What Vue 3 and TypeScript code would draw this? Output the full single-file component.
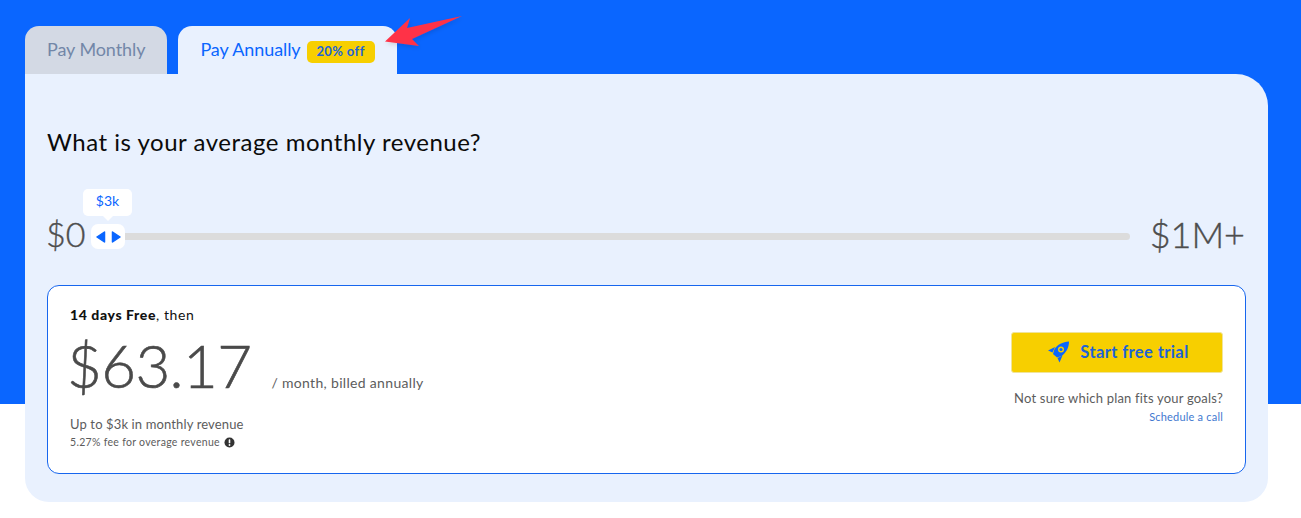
<script setup lang="ts">
const tabs = [
  { label: 'Pay Monthly', active: false },
  { label: 'Pay Annually', active: true, badge: '20% off' },
]
</script>

<template>
  <div class="page">
    <div class="tabs">
      <div v-for="t in tabs" :key="t.label" class="tab" :class="{ active: t.active }">
        <span>{{ t.label }}</span>
        <span v-if="t.badge" class="badge">{{ t.badge }}</span>
      </div>
    </div>
    <svg class="arrow" width="90" height="44" viewBox="380 10 90 44">
      <defs>
        <filter id="sh" x="-20%" y="-20%" width="140%" height="160%">
          <feDropShadow dx="1" dy="2" stdDeviation="2" flood-color="#000" flood-opacity="0.12" />
        </filter>
      </defs>
      <path d="M385 41.5 L410 18 L407 28 L462 16 L412 39 L419 46 Z" fill="#ff3347" filter="url(#sh)" />
    </svg>
    <div class="panel">
      <h2 class="question">What is your average monthly revenue?</h2>
      <div class="slider">
        <span class="end first">$0</span>
        <div class="track">
          <div class="handle">
            <div class="tip">$3k</div>
            <svg width="25" height="12" viewBox="0 0 25 12"><path d="M8.500 1v10L1 6zM16.500 1v10L24 6z" fill="#0a66ff" stroke="#0a66ff" stroke-width="1.500" stroke-linejoin="round" /></svg>
          </div>
        </div>
        <span class="end last">$1M+</span>
      </div>
      <div class="card">
        <div class="left">
          <div class="free"><b>14 days Free</b>, then</div>
          <div class="price-row">
            <span class="price">$63.17</span>
            <span class="per">/ month, billed annually</span>
          </div>
          <div class="up">Up to $3k in monthly revenue</div>
          <div class="fee">
            5.27% fee for overage revenue
            <svg width="11" height="11" viewBox="0 0 11 11"><circle cx="5.500" cy="5.500" r="5" fill="#333" /><rect x="4.700" y="2.300" width="1.600" height="4" rx=".6" fill="#fff" /><circle cx="5.500" cy="8" r=".9" fill="#fff" /></svg>
          </div>
        </div>
        <div class="right">
          <button class="cta">
            <svg class="rocket" width="23" height="22" viewBox="0 0 23 22">
              <path fill="#0a66ff" d="M22 .5C15.500 1 10.500 3.500 7.500 8L6 13l4 3.500 4.500-1.500C19 11.500 22 7 22 .5Z" />
              <path fill="#0a66ff" d="M8 6 1 9.500l4.500 2zM15.500 14.500 12.500 21.500 10.500 17z" />
              <circle cx="14" cy="8.500" r="3" fill="#f7cf00" />
              <circle cx="14" cy="8.500" r="1.600" fill="#0a66ff" />
            </svg>
            <span>Start free trial</span>
          </button>
          <div class="unsure">Not sure which plan fits your goals?</div>
          <a class="call">Schedule a call</a>
        </div>
      </div>
    </div>
  </div>
</template>

<style>
html, body { margin: 0; background: #fff; }
</style>

<style scoped>
.page {
  position: relative;
  box-sizing: border-box;
  width: 1301px;
  height: 518px;
  padding: 26px 33px 16px 25px;
  background: linear-gradient(#0a66ff 404px, #fff 404px);
  font-family: Lato, "Open Sans", sans-serif;
  overflow: hidden;
}
.tabs { display: flex; gap: 11px; height: 48px; }
.tab {
  display: flex;
  align-items: center;
  gap: 6px;
  padding: 0 22px 3px;
  border-radius: 14px 14px 0 0;
  background: #d3d9e4;
  color: #7287a8;
  font-size: 18px;
  letter-spacing: -.08px;
}
.tab.active { background: #e9f1fe; color: #0a66ff; }
.badge {
  display: flex;
  align-items: center;
  justify-content: center;
  align-self: flex-start;
  box-sizing: border-box;
  width: 68px;
  height: 22px;
  margin-top: 15px;
  padding-bottom: 2px;
  border-radius: 5px;
  background: #f7cf00;
  color: #1d63d8;
  font-size: 13px;
  font-weight: 700;
  letter-spacing: .4px;
}
.arrow { position: absolute; left: 380px; top: 10px; }
.panel {
  box-sizing: border-box;
  height: 428px;
  padding: 54px 22px 28px;
  background: #e9f1fe;
  border-radius: 0 32px 24px 24px;
}
.question {
  margin: 0;
  height: 28px;
  font-size: 24px;
  line-height: 28px;
  font-weight: 400;
  color: #0b0b0b;
  letter-spacing: .52px;
}
.slider {
  display: flex;
  align-items: center;
  height: 44px;
  margin-top: 57px;
  margin-bottom: 28px;
}
.end {
  padding-bottom: 2px;
  font-size: 36px;
  line-height: 44px;
  color: #4d4d4d;
  font-weight: 300;
  -webkit-text-stroke: .4px #4d4d4d;
}
.first { width: 45px; margin-left: -1px; flex: none; font-size: 34px; }
.last { margin-left: auto; margin-right: 1px; }
.track {
  position: relative;
  flex: none;
  width: 1039px;
  height: 7px;
  margin-top: 3px;
  border-radius: 4px;
  background: #dcdcdc;
}
.handle {
  position: absolute;
  left: 0;
  top: -9px;
  display: flex;
  align-items: center;
  justify-content: center;
  width: 34px;
  height: 25px;
  border-radius: 7px;
  background: #fff;
}
.tip {
  position: absolute;
  left: -8px;
  top: -35px;
  width: 49px;
  height: 27px;
  border-radius: 5px;
  background: #fff;
  color: #0a66ff;
  font-size: 14px;
  line-height: 24px;
  text-align: center;
}
.tip::after {
  content: "";
  position: absolute;
  left: 19px;
  bottom: -5px;
  border: 6px solid transparent;
  border-bottom: 0;
  border-top-color: #fff;
}
.card {
  box-sizing: border-box;
  height: 189px;
  display: flex;
  justify-content: space-between;
  padding: 20px 22px 0 22px;
  border: 1px solid #1766ee;
  border-radius: 12px;
  background: #fff;
}
.free { font-size: 14px; line-height: 17px; color: #111; letter-spacing: .6px; }
.free b { font-weight: 900; }
.price-row { display: flex; align-items: baseline; gap: 20px; height: 73px; margin-top: 6px; margin-left: -3px; }
.price {
  font-size: 60px;
  line-height: 73px;
  font-weight: 300;
  color: #4a4a4a;
  letter-spacing: -.6px;
  -webkit-text-stroke: .6px #4a4a4a;
}
.per { font-size: 14px; color: #5c5c5c; letter-spacing: .32px; }
.up { margin-top: 14px; font-size: 13px; line-height: 17px; color: #5c5c5c; letter-spacing: .13px; }
.fee { display: flex; align-items: center; gap: 4px; margin-top: 2px; font-size: 10.500px; line-height: 15px; color: #5c5c5c; letter-spacing: .3px; }
.right { display: flex; flex-direction: column; align-items: flex-end; padding-top: 26px; }
.cta {
  display: flex;
  align-items: center;
  justify-content: center;
  gap: 10px;
  box-sizing: border-box;
  width: 212px;
  height: 41px;
  padding: 0 0 2px 2px;
  border: 1px solid #f0e49a;
  border-radius: 3px;
  background: #f7cf00;
  color: #1d63d8;
  font: 700 16.500px Lato, sans-serif;
  letter-spacing: .4px;
}
.unsure { margin-top: 17px; font-size: 13px; line-height: 17px; color: #5c5c5c; letter-spacing: .2px; }
.call { margin-top: 3px; font-size: 11px; line-height: 14px; color: #3f78d0; letter-spacing: .2px; }
</style>
